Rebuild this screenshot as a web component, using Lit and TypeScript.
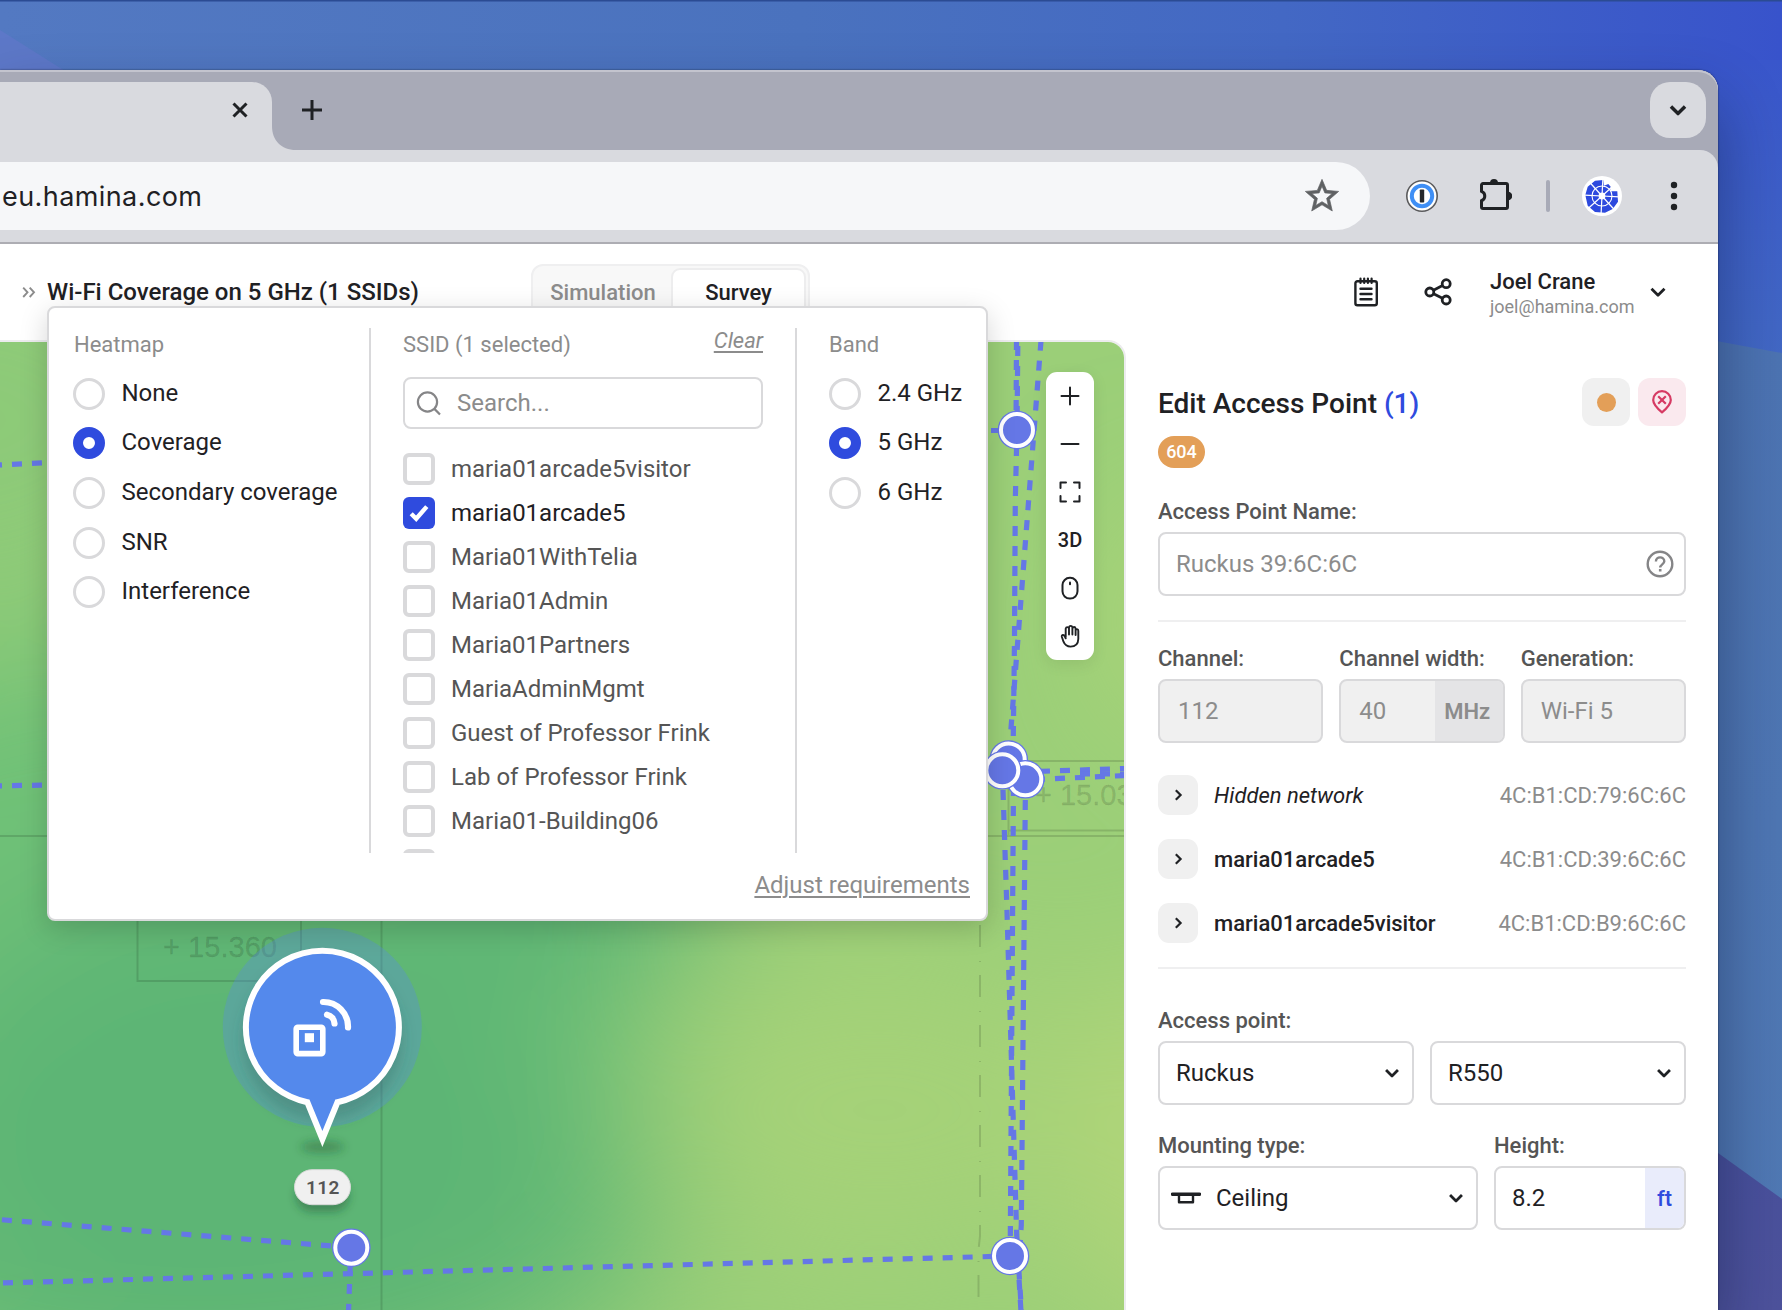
import { LitElement, html, svg, css } from "lit";
import { customElement } from "lit/decorators.js";
import { classMap } from "lit/directives/class-map.js";

const chevronDown = (size: number, stroke = 3) => html`
  <svg width=${size} height=${size} viewBox="0 0 24 24" fill="none" stroke="#1f2124" stroke-width=${stroke}>
    <path d="M5.5 8.8 12 15.3l6.5-6.5" stroke-linejoin="round" />
  </svg>`;

const HEATMAPS = ["None", "Coverage", "Secondary coverage", "SNR", "Interference"];
const BANDS = ["2.4 GHz", "5 GHz", "6 GHz"];
const SSIDS = [
  "maria01arcade5visitor",
  "maria01arcade5",
  "Maria01WithTelia",
  "Maria01Admin",
  "Maria01Partners",
  "MariaAdminMgmt",
  "Guest of Professor Frink",
  "Lab of Professor Frink",
  "Maria01-Building06",
  "",
];
const NETWORKS = [
  { name: "Hidden network", mac: "4C:B1:CD:79:6C:6C", hidden: true },
  { name: "maria01arcade5", mac: "4C:B1:CD:39:6C:6C", hidden: false },
  { name: "maria01arcade5visitor", mac: "4C:B1:CD:B9:6C:6C", hidden: false },
];

@customElement("browser-chrome")
class BrowserChrome extends LitElement {
  static styles = css`
    :host { display: block; font-family: Inter, "Liberation Sans", sans-serif; color: #1f2124; }
    * { box-sizing: border-box; }
    svg { display: block; flex: none; }
    .strip { display: flex; height: 80px; background: #a8aab7; padding: 12px 12px 0 0; box-shadow: inset 0 2px 0 #c3c4ce; border-radius: 0 20px 0 0; }
    .tab { width: 272px; height: 68px; background: #d9dadf; border-radius: 0 20px 0 0; display: flex; justify-content: flex-end; padding: 18px 22px 0 0; }
    .flare { width: 24px; height: 68px; display: flex; align-items: flex-end; }
    .plus { padding: 17px 0 0 5px; flex: 1; }
    .tabs-menu { width: 56px; height: 56px; border-radius: 20px; background: #d9dadf; display: flex; align-items: center; justify-content: center; }
    .under { background: #a8aab7; }
    .bar { display: flex; align-items: center; height: 94px; background: #d9dadf; border-bottom: 2px solid #adadb3; border-radius: 0 18px 0 0; }
    .url { display: flex; align-items: center; justify-content: space-between; width: 1370px; height: 68px; background: #f6f7f9; border-radius: 0 34px 34px 0; padding: 0 28px 0 2px; font-size: 27px; letter-spacing: 0.42px; }
    .onepw { margin-left: 36px; }
    .ext { margin-left: 42px; }
    .sep { width: 4px; height: 32px; border-radius: 2px; background: #a8aab7; margin-left: 34px; }
    .avatar { margin-left: 32px; }
    .dots { margin-left: 48px; }
  `;
  render() {
    const spokes = Array.from({ length: 8 }, (_, i) => i * 45 + 3);
    return html`
      <div class="strip">
        <div class="tab">
          <svg width="20" height="20" viewBox="0 0 20 20" stroke="#1f2124" stroke-width="3"><path d="M3.5 3.5l13 13M16.5 3.5l-13 13" /></svg>
        </div>
        <div class="flare"><svg width="24" height="24" viewBox="0 0 24 24"><path d="M0 0C0 14 9 24 24 24H0z" fill="#d9dadf" /></svg></div>
        <div class="plus"><svg width="22" height="22" viewBox="0 0 22 22" stroke="#1f2124" stroke-width="3"><path d="M11 1v20M1 11h20" /></svg></div>
        <div class="tabs-menu">${chevronDown(26, 3.2)}</div>
      </div>
      <div class="under">
        <div class="bar">
          <div class="url">
            <span>eu.hamina.com</span>
            <svg width="40" height="40" viewBox="0 0 24 24" fill="#5f6163" stroke="#5f6163" stroke-width="0.4">
              <path d="M22 9.24l-7.19-.62L12 2 9.19 8.63 2 9.24l5.46 4.73L5.82 21 12 17.27 18.18 21l-1.63-7.03L22 9.24zM12 15.4l-3.76 2.27 1-4.28-3.32-2.88 4.38-.38L12 6.1l1.71 4.04 4.38.38-3.32 2.88 1 4.28L12 15.4z" />
            </svg>
          </div>
          <svg class="onepw" width="32" height="32" viewBox="0 0 32 32">
            <circle cx="16" cy="16" r="15.2" fill="#fff" stroke="#5a5a5c" stroke-width="1.6" />
            <circle cx="16" cy="16" r="10.2" fill="#fff" stroke="#3f8ff5" stroke-width="4" />
            <rect x="13.8" y="9.5" width="4.4" height="13" rx="0.8" fill="#26282b" />
          </svg>
          <svg class="ext" width="32" height="36" viewBox="0 2 32 36">
            <path d="M3 7.5H26a1.5 1.5 0 0 1 1.5 1.5V31a1.5 1.5 0 0 1-1.5 1.5H3A1.5 1.5 0 0 1 1.5 31v-6.3a5 5 0 0 0 0-9.400V9A1.5 1.5 0 0 1 3 7.5z" fill="none" stroke="#1f2124" stroke-width="3" />
            <path d="M10 7a4 4 0 0 1 8 0zM28 15.700a4.200 4.200 0 0 1 0 8.600z" fill="#1f2124" />
          </svg>
          <div class="sep"></div>
          <svg class="avatar" width="40" height="40" viewBox="0 0 40 40">
            <circle cx="20" cy="20" r="20" fill="#fff" />
            <path d="M13 4.700L21.300 4l.7 5.700L26.300 8l2.400 2.700-.7 4.600h7.300l.7 10.400-5.300 7.300-7.700 3.700-10-.7-7.300-6.300L3.300 19l2.400-8.300z" fill="#2d49de" />
            <circle cx="20" cy="20" r="10" fill="none" stroke="#fff" stroke-width="1.1" />
            <circle cx="20" cy="20" r="3.400" fill="#fff" />
            ${spokes.map((a) => svg`<path d="M20 20V2.500" stroke="#fff" stroke-width="1.200" transform="rotate(${a} 20 20)" />`)}
          </svg>
          <svg class="dots" width="8" height="32" viewBox="0 0 8 32" fill="#1f2124">
            <circle cx="4" cy="5" r="3.2" /><circle cx="4" cy="16" r="3.2" /><circle cx="4" cy="27" r="3.2" />
          </svg>
        </div>
      </div>
    `;
  }
}

@customElement("app-header")
class AppHeader extends LitElement {
  static styles = css`
    :host { display: block; font-family: Roboto, sans-serif; color: #1f2124; }
    * { box-sizing: border-box; }
    svg { display: block; flex: none; }
    .head { display: flex; align-items: center; height: 96px; padding: 0 48px 0 21px; background: #fff; }
    .crumb { width: 26px; }
    .title { width: 484px; font-size: 24px; font-weight: 500; line-height: 28px; white-space: nowrap; }
    .seg { display: flex; width: 279px; height: 56px; padding: 2px; border: 2px solid #efeff0; border-radius: 12px; background: #f8f8f8; font-size: 22px; font-weight: 500; line-height: 44px; text-align: center; }
    .off { width: 136px; color: #8c8c8c; line-height: 49px; }
    .on { width: 135px; background: #fff; border: 2px solid #ededee; border-radius: 9px; line-height: 45px; }
    .spacer { flex: 1; }
    .share { margin: 0 36px 0 40px; }
    .user { width: 144px; margin-right: 12px; white-space: nowrap; }
    .name { font-size: 22px; line-height: 28px; font-weight: 500; padding-top: 1px; }
    .mail { font-size: 18px; line-height: 22px; color: #8c8c8c; }
  `;
  render() {
    return html`
      <div class="head">
        <div class="crumb">
          <svg width="16" height="14" viewBox="0 0 16 14" fill="none" stroke="#8c8c8c" stroke-width="1.9"><path d="M2.200 2.600L6.500 7.300 2.200 12M8.700 2.600L13 7.300 8.700 12" /></svg>
        </div>
        <span class="title">Wi-Fi Coverage on 5 GHz (1 SSIDs)</span>
        <div class="seg"><span class="off">Simulation</span><span class="on">Survey</span></div>
        <div class="spacer"></div>
        <svg width="32" height="32" viewBox="0 0 32 32" fill="none" stroke="#1f2124" stroke-width="2.4" stroke-linecap="round">
          <rect x="5.400" y="5.200" width="21.400" height="24" rx="2" />
          <path d="M10.500 2.500v4.500M14.200 2.500v4.500M17.900 2.500v4.500M21.600 2.500v4.500" stroke-width="2.2" />
          <path d="M10.500 12.700h11M10.500 18h11M10.500 23.200h11" />
        </svg>
        <svg class="share" width="32" height="32" viewBox="0 0 32 32" fill="none" stroke="#1f2124" stroke-width="2.8">
          <circle cx="7.800" cy="16" r="4" /><circle cx="24.200" cy="7.700" r="4" /><circle cx="24.200" cy="24" r="4" />
          <path d="M11.500 14.200l9-4.600M11.500 17.800l9 4.500" />
        </svg>
        <div class="user">
          <div class="name">Joel Crane</div>
          <div class="mail">joel@hamina.com</div>
        </div>
        ${chevronDown(24, 2.8)}
      </div>
    `;
  }
}

@customElement("heatmap-menu")
class HeatmapMenu extends LitElement {
  static styles = css`
    :host { display: block; font-family: Roboto, sans-serif; color: #1f2124; }
    * { box-sizing: border-box; }
    svg { display: block; flex: none; }
    .menu { width: 941px; height: 615px; background: #fff; border: 2px solid #d9d9db; border-radius: 8px; padding: 20px 0 0 24px; box-shadow: 0 8px 28px rgba(0, 0, 0, 0.17); }
    .cols { display: flex; height: 525px; overflow: hidden; }
    .col { padding-top: 3px; flex: none; }
    .c1 { width: 298px; border-right: 2px solid #d9d9db; }
    .c1 .cap { padding-left: 1px; }
    .c2 { width: 426px; padding-left: 32px; padding-right: 32px; border-right: 2px solid #d9d9db; }
    .c3 { padding-left: 32px; }
    .top { display: flex; justify-content: space-between; }
    .cap { font-size: 22px; line-height: 28px; color: #8c8c8c; }
    .clear { font-size: 22px; line-height: 20px; font-style: italic; text-decoration: underline; text-underline-offset: 3px; color: #8c8c8c; }
    .radios { margin-top: 10px; font-size: 24px; }
    .radio { display: flex; align-items: center; gap: 16.5px; height: 49.6px; line-height: 27px; white-space: nowrap; }
    .txt { padding-bottom: 1px; }
    .knob { width: 32px; height: 32px; flex: none; border: 3px solid #d9d9db; border-radius: 50%; background: #fff; }
    .knob.on { border: 10px solid #2f4bde; }
    .search { display: flex; align-items: center; gap: 15px; height: 52px; margin-top: 18px; padding-left: 11px; border: 2px solid #d9d9db; border-radius: 8px; font-size: 24px; color: #8c8c8c; }
    .list { margin-top: 18px; font-size: 24px; color: #555; }
    .item { display: flex; align-items: center; gap: 16px; height: 44px; line-height: 28px; }
    .item.on { color: #1f2124; }
    .box { width: 32px; height: 32px; flex: none; border: 4px solid #d9d9db; border-radius: 6px; }
    .box.on { border: 0; background: #2f4bde; }
    .foot { margin: 16px 16px 0 0; text-align: right; font-size: 24px; line-height: 32px; color: #8c8c8c; text-decoration: underline; text-underline-offset: 3px; text-decoration-thickness: 2px; }
  `;
  radios(items: string[], selected: number) {
    return html`<div class="radios">
      ${items.map((t, i) => html`<div class="radio"><span class=${classMap({ knob: true, on: i === selected })}></span><span class="txt">${t}</span></div>`)}
    </div>`;
  }
  render() {
    return html`
      <div class="menu">
        <div class="cols">
          <div class="col c1"><div class="cap">Heatmap</div>${this.radios(HEATMAPS, 1)}</div>
          <div class="col c2">
            <div class="top"><span class="cap">SSID (1 selected)</span><span class="clear">Clear</span></div>
            <div class="search">
              <svg width="26" height="26" viewBox="0 0 26 26" fill="none" stroke="#858587" stroke-width="2.2"><circle cx="11.500" cy="12" r="9.600" /><path d="M18.400 18.900l5.600 5.600" /></svg>
              <span>Search...</span>
            </div>
            <div class="list">
              ${SSIDS.map((s, i) => html`<div class=${classMap({ item: true, on: i === 1 })}>
                <span class=${classMap({ box: true, on: i === 1 })}>${i === 1
                  ? html`<svg width="32" height="32" viewBox="0 0 32 32" fill="none" stroke="#fff" stroke-width="4.400"><path d="M8.200 16.700l5 5L23.800 9.600" stroke-linejoin="miter" /></svg>`
                  : ""}</span>
                <span>${s}</span>
              </div>`)}
            </div>
          </div>
          <div class="col c3"><div class="cap">Band</div>${this.radios(BANDS, 1)}</div>
        </div>
        <div class="foot">Adjust requirements</div>
      </div>
    `;
  }
}

const PATHS = [
  "M-8 465.300L48 462.500",
  "M-8 786L48 785",
  "M-18 1218.200L351 1247.500",
  "M-17 1283.500L1010 1256",
  "M351 1244L348.500 1312",
  "M1018 326L1017 430L1015.300 500L1014.500 640L1013 760",
  "M1016.500 340L1016 430",
  "M1041 340.700L1010.500 735",
  "M1003 790L1007 912L1016.700 1235L1021.500 1312",
  "M1013.500 786L1012.600 912L1010.300 1240",
  "M1025.500 780L1024.300 905L1021.300 1225L1018.500 1270L1021 1312",
  "M1020 772L1126 768.500",
  "M1035 779.500L1126 775.500",
  "M1080 774H1126",
  "M991 430.500H1017",
];
const NODES = [[1017, 430], [1008.7, 759.5], [1025.3, 779.3], [1002.3, 770.3], [1010, 1256], [351.3, 1247.7]];

@customElement("survey-map")
class SurveyMap extends LitElement {
  static styles = css`
    :host { display: block; width: 1126px; flex: none; font-family: Roboto, sans-serif; }
    * { box-sizing: border-box; }
    .map { position: relative; width: 1126px; height: 970px; border: 2px solid #ececee; border-width: 2px 2px 0 0; border-radius: 0 18px 0 0; overflow: hidden; }
    .map > svg { display: block; }
    .plan { font-family: "Liberation Sans", sans-serif; font-size: 29px; fill: #000; fill-opacity: 0.13; stroke: #000; stroke-opacity: 0.07; stroke-width: 0.8px; }
    .chan { font-size: 19px; font-weight: 600; fill: #555; letter-spacing: 0.4px; }
    .tools { position: absolute; right: 30px; top: 30px; width: 48px; border-radius: 11px; background: #fff; box-shadow: 0 4px 16px rgba(0, 0, 0, 0.08); color: #1f2124; font-size: 20px; font-weight: 500; }
    .tool { height: 48px; display: flex; align-items: center; justify-content: center; }
    .tool svg { display: block; }
  `;
  tool(body: unknown) {
    return html`<div class="tool"><svg width="24" height="24" viewBox="0 0 24 24" fill="none" stroke="#1f2124" stroke-width="2" stroke-linecap="round" stroke-linejoin="round">${body}</svg></div>`;
  }
  render() {
    return html`
      <div class="map">
        <svg width="1124" height="968" viewBox="0 342 1124 968">
          <defs>
            <filter id="blur" x="-60%" y="-60%" width="220%" height="220%"><feGaussianBlur stdDeviation="70" /></filter>
            <filter id="soft" x="-60%" y="-60%" width="220%" height="220%"><feGaussianBlur stdDeviation="5" /></filter>
            <filter id="drop" x="-60%" y="-60%" width="220%" height="220%"><feGaussianBlur stdDeviation="7" /></filter>
          </defs>
          <rect y="342" width="1124" height="968" fill="#9bcf78" />
          <g filter="url(#blur)">
            <ellipse cx="-40" cy="420" rx="260" ry="200" fill="#8dca78" />
            <ellipse cx="880" cy="1110" rx="230" ry="150" fill="#a5d278" />
            <ellipse cx="1180" cy="1150" rx="90" ry="200" fill="#b4d679" />
            <ellipse cx="1180" cy="620" rx="60" ry="120" fill="#b0d578" />
            <ellipse cx="150" cy="970" rx="520" ry="330" fill="#70c177" />
            <ellipse cx="200" cy="1200" rx="470" ry="240" fill="#68bc76" />
            <ellipse cx="240" cy="1130" rx="330" ry="260" fill="#5db574" />
            <ellipse cx="570" cy="860" rx="160" ry="110" fill="#5db574" />
          </g>
          <g fill="none" stroke="#000" stroke-opacity="0.13" stroke-width="2">
            <path d="M137.500 900V981H301V900M381.500 900V1312M0 836H48M985 836H1124M1008.500 836V761H1124M1008.500 830.500H1124" />
            <path d="M980 925V1236L978.500 1250V1312" stroke-dasharray="22 14 1 13" />
          </g>
          <text class="plan" x="163" y="956.500" textLength="114">+ 15.360</text>
          <text class="plan" x="1035" y="805">+ 15.03</text>
          <g fill="none" stroke="#6577e6" stroke-width="5.200" stroke-dasharray="10 10">
            ${PATHS.map((d) => svg`<path d=${d} />`)}
          </g>
          ${NODES.map(([x, y]) => svg`
            <circle cx=${x} cy=${y} r="19.300" fill="#6577e6" />
            <circle cx=${x} cy=${y} r="16" fill="#6577e6" stroke="#fff" stroke-width="4" />`)}
          <circle cx="322.300" cy="1027.300" r="99.500" fill="#5689ea" fill-opacity="0.32" />
          <circle cx="322.300" cy="1040" r="80" fill="#2a5b50" fill-opacity="0.28" filter="url(#drop)" />
          <ellipse cx="322.500" cy="1147" rx="22" ry="6" fill="#1c4a2a" fill-opacity="0.36" filter="url(#soft)" />
          <path d="M307.300 1102.200A76.500 76.500 0 1 1 337.500 1102.200L322.400 1139z" fill="#5489ec" stroke="#fff" stroke-width="6" stroke-miterlimit="6" />
          <g fill="none" stroke="#fff" stroke-width="5.600" stroke-linecap="round">
            <rect x="296.200" y="1027.300" width="26.600" height="26.300" rx="1.500" />
            <path d="M323 1002a24.500 24.500 0 0 1 25 25.500M327 1014.700a9.500 9.500 0 0 1 7.500 8.800" stroke-width="6.200" />
          </g>
          <rect x="304.800" y="1033.200" width="9.200" height="9" fill="#fff" />
          <rect x="296" y="1180" width="53" height="32" rx="16" fill="#1c4a2a" fill-opacity="0.42" filter="url(#soft)" />
          <rect x="294.500" y="1169.700" width="56" height="35" rx="17.500" fill="#f0f0f0" stroke="#d8d9d8" />
          <text class="chan" x="322.800" y="1193.500" text-anchor="middle">112</text>
        </svg>
        <div class="tools">
          ${this.tool(svg`<path d="M12 3.500v17M3.500 12h17" />`)}
          ${this.tool(svg`<path d="M3.500 12h17" />`)}
          ${this.tool(svg`<path d="M2.500 8V2.500H8M16 2.500h5.500V8M21.500 16v5.500H16M8 21.500H2.500V16" />`)}
          <div class="tool">3D</div>
          ${this.tool(svg`<rect x="4.500" y="1.800" width="15" height="20.800" rx="7.300" /><path d="M12 6.600v1.600" />`)}
          ${this.tool(svg`<g transform="translate(-0.700 0)"><path d="M8.400 13V4.600q.3-1.500 1.600-1.500t1.700 1.500M11.700 10.500V3.400q.3-1.500 1.700-1.500t1.700 1.500V10.500M15.200 4.300q.4-1.300 1.600-1.300t1.500 1.500V11M18.300 6.300q.4-1.200 1.400-1.200 1.300.1 1.300 1.600V15q-.2 7.600-7.800 7.600c-3.500 0-5.700-1.700-7-4.900L4.600 13q-.5-1.700.9-2 1.200-.2 1.800 1l1.100 2.300" stroke-width="1.900" /></g>`)}
        </div>
      </div>
    `;
  }
}

@customElement("access-point-panel")
class AccessPointPanel extends LitElement {
  static styles = css`
    :host { display: block; flex: 1; font-family: Roboto, sans-serif; color: #1f2124; background: #fff; }
    * { box-sizing: border-box; }
    svg { display: block; flex: none; }
    .panel { padding: 38px 32px 0; }
    .row { display: flex; align-items: center; }
    .title { flex: 1; font-size: 28px; font-weight: 500; line-height: 34px; padding-top: 4px; }
    .count { color: #2f4bde; }
    .btn { width: 48px; height: 48px; border-radius: 12px; background: #f0f0f0; display: flex; align-items: center; justify-content: center; }
    .btn.danger { background: #fae9ee; margin-left: 8px; }
    .dot { width: 19px; height: 19px; border-radius: 50%; background: #e39f58; }
    .tag { width: 47px; height: 32px; margin-top: 10px; border-radius: 16px; background: #e39f58; color: #fff; font-size: 18px; font-weight: 500; line-height: 32px; text-align: center; }
    .label { font-size: 22px; font-weight: 500; line-height: 28px; color: #555; margin-bottom: 6px; white-space: nowrap; }
    .field { display: flex; align-items: center; justify-content: space-between; height: 64px; border: 2px solid #d9d9db; border-radius: 8px; background: #fff; font-size: 24px; padding: 0 9px 0 16px; overflow: hidden; }
    .ghost { color: #8c8c8c; }
    .field.off { background: #f0f0f0; color: #8c8c8c; padding: 0 0 0 18px; }
    .unit { width: 68px; height: 60px; background: #e4e4e6; font-size: 22px; font-weight: 600; line-height: 61px; text-align: center; padding-right: 3px; }
    .unit.ft { width: 39px; background: #e9ecfb; color: #2f4bde; font-weight: 500; padding: 0; }
    .field.h { padding-right: 0; }
    .first { margin-top: 30px; }
    .rule { height: 2px; background: #efeff0; margin-top: 24px; }
    .three { display: grid; grid-template-columns: repeat(3, 1fr); gap: 16px; margin-top: 23px; }
    .nets { display: grid; gap: 24px; margin-top: 32px; font-size: 22px; line-height: 28px; }
    .net { display: flex; align-items: center; height: 40px; }
    .more { width: 40px; height: 40px; border-radius: 11px; background: #f0f0f0; margin-right: 16px; display: flex; align-items: center; justify-content: center; }
    .nm { flex: 1; font-weight: 500; padding-top: 2px; }
    .nm.hidden { font-style: italic; font-weight: 400; }
    .mac { color: #8c8c8c; padding-top: 2px; }
    .model { margin-top: 38px; }
    .two { display: grid; grid-template-columns: 1fr 1fr; gap: 16px; }
    .mount { display: grid; grid-template-columns: 320px 192px; gap: 16px; margin-top: 27px; }
    .field.m { padding-left: 11px; justify-content: flex-start; }
    .grow { flex: 1; padding-left: 15px; }
  `;
  render() {
    return html`
      <div class="panel">
        <div class="row">
          <div class="title">Edit Access Point <span class="count">(1)</span></div>
          <div class="btn"><span class="dot"></span></div>
          <div class="btn danger">
            <svg width="26" height="26" viewBox="0 0 26 26" fill="none" stroke="#d63a63" stroke-width="2.2" stroke-linejoin="round">
              <path d="M13 23.300C8.500 19.500 4.200 15.500 4.200 10.900a8.800 8.800 0 0 1 17.600 0c0 4.600-4.300 8.600-8.800 12.400z" />
              <path d="M9.200 7.200l7.600 7.600M16.800 7.200l-7.600 7.600" />
            </svg>
          </div>
        </div>
        <div class="tag">604</div>
        <div class="label first">Access Point Name:</div>
        <div class="field ghost"><span>Ruckus 39:6C:6C</span>
          <svg width="30" height="30" viewBox="0 0 30 30" fill="none" stroke="#858587" stroke-width="2.4">
            <circle cx="15" cy="15" r="12.300" /><path d="M10.900 12.600c0-5.600 8.400-5.400 8.400-.4 0 3.100-4.100 3.200-4.100 6.400" /><path d="M15.200 20v2.600" stroke-width="2.600" />
          </svg>
        </div>
        <div class="rule"></div>
        <div class="three">
          <div><div class="label">Channel:</div><div class="field off">112</div></div>
          <div><div class="label">Channel width:</div><div class="field off"><span>40</span><span class="unit">MHz</span></div></div>
          <div><div class="label">Generation:</div><div class="field off">Wi-Fi 5</div></div>
        </div>
        <div class="nets">
          ${NETWORKS.map((n) => html`<div class="net">
            <span class="more"><svg width="16" height="16" viewBox="0 0 16 16" fill="none" stroke="#1f2124" stroke-width="2.2"><path d="M5.800 3.200L10.600 8l-4.800 4.800" /></svg></span>
            <span class=${classMap({ nm: true, hidden: n.hidden })}>${n.name}</span>
            <span class="mac">${n.mac}</span>
          </div>`)}
        </div>
        <div class="rule"></div>
        <div class="label model">Access point:</div>
        <div class="two">
          <div class="field"><span>Ruckus</span>${chevronDown(22, 3)}</div>
          <div class="field"><span>R550</span>${chevronDown(22, 3)}</div>
        </div>
        <div class="mount">
          <div>
            <div class="label">Mounting type:</div>
            <div class="field m">
              <svg width="30" height="14" viewBox="0 0 30 14" fill="none" stroke="#1f2124"><path d="M1.500 3.200H28.500" stroke-width="3.600" stroke-linecap="round" /><path d="M8 4v7.200h14V4" stroke-width="2.400" stroke-linejoin="round" /></svg>
              <span class="grow">Ceiling</span>${chevronDown(22, 3)}
            </div>
          </div>
          <div>
            <div class="label">Height:</div>
            <div class="field h"><span>8.2</span><span class="unit ft">ft</span></div>
          </div>
        </div>
      </div>
    `;
  }
}

@customElement("app-root")
class AppRoot extends LitElement {
  static styles = css`
    :host { display: block; }
    .desk { position: relative; width: 1782px; height: 1310px; overflow: hidden; padding-top: 70px; box-sizing: border-box; }
    .wall { position: absolute; inset: 0; display: block; }
    .window { position: relative; width: 1718px; height: 1240px; background: #fff; border-radius: 0 20px 0 0; box-shadow: 0 0 2px rgba(0, 0, 0, 0.6), 0 34px 64px rgba(10, 20, 50, 0.42); }
    .app { position: relative; height: 1066px; }
    .body { display: flex; }
    .pop { position: absolute; left: 47px; top: 62px; }
  `;
  render() {
    return html`
      <div class="desk">
        <svg class="wall" width="1782" height="1310" viewBox="0 0 1782 1310" preserveAspectRatio="none">
          <defs>
            <linearGradient id="top" x1="0" x2="1"><stop offset="0" stop-color="#5379c2" /><stop offset=".45" stop-color="#4a72be" /><stop offset=".72" stop-color="#4368c4" /><stop offset="1" stop-color="#3853cb" /></linearGradient>
            <linearGradient id="side" gradientUnits="userSpaceOnUse" x1="0" y1="60" x2="0" y2="360"><stop offset="0" stop-color="#3956cb" /><stop offset="1" stop-color="#4268c4" /></linearGradient>
            <linearGradient id="mid" x1="0" y1="0" x2="0" y2="1"><stop offset="0" stop-color="#4c73b2" /><stop offset="1" stop-color="#5079b4" /></linearGradient>
            <linearGradient id="low" x1="0" y1="0" x2="0" y2="1"><stop offset="0" stop-color="#48509c" /><stop offset="1" stop-color="#4d529c" /></linearGradient>
          </defs>
          <rect width="1782" height="1310" fill="url(#top)" />
          <path d="M0 30L95 90H0z" fill="#5d78c8" />
          <rect x="1700" y="60" width="82" height="300" fill="url(#side)" />
          <path d="M1700 338L1782 353V1310H1700z" fill="url(#mid)" />
          <path d="M1700 1140L1782 1199V1310H1700z" fill="url(#low)" />
          <rect width="1782" height="1.500" fill="#2b4b93" />
        </svg>
        <div class="window">
          <browser-chrome></browser-chrome>
          <div class="app">
            <app-header></app-header>
            <div class="body">
              <survey-map></survey-map>
              <access-point-panel></access-point-panel>
            </div>
            <heatmap-menu class="pop"></heatmap-menu>
          </div>
        </div>
      </div>
    `;
  }
}
